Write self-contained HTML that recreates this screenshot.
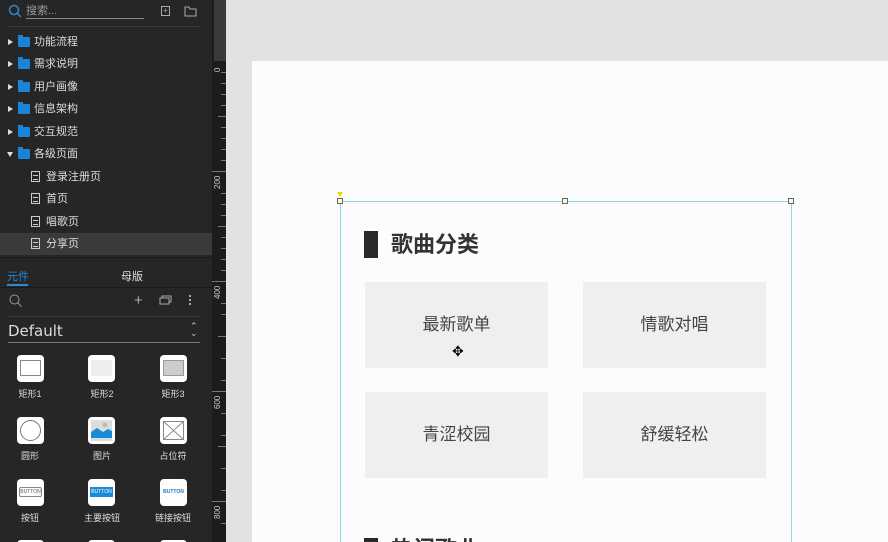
<!DOCTYPE html>
<html style="width:888px;height:542px;overflow:hidden"><head><meta charset="utf-8"><style>
*{margin:0;padding:0;box-sizing:border-box}
body{width:888px;height:542px;overflow:hidden;position:relative;background:#e2e2e2;font-family:"Liberation Sans","Noto Sans CJK SC",sans-serif}
.side{position:absolute;left:0;top:0;width:212px;height:542px;background:#262626;color:#ddd;overflow:hidden}
.a{position:absolute}
.row{position:absolute;left:0;width:212px;height:22px;font-size:11px;line-height:22px;color:#ddd}
.tri{position:absolute;left:8px;top:8px;width:0;height:0;border-top:3px solid transparent;border-bottom:3px solid transparent;border-left:5px solid #ddd}
.fold{position:absolute;left:18px;top:6px;width:12px;height:10px;background:#1a84d8;border-radius:1px}
.fold:before{content:"";position:absolute;left:0;top:-2px;width:5px;height:3px;background:#1a84d8}
.pg{position:absolute;left:31px;top:5px;width:9px;height:11px;border:1px solid #ccc}
.pg:after{content:"";position:absolute;left:1px;top:3px;width:5px;height:3px;border-top:1px solid #ccc;border-bottom:1px solid #ccc}
.ic{position:absolute;width:27px;height:27px;background:#fff;border-radius:4px}
.lb{position:absolute;width:60px;text-align:center;font-size:9px;color:#ddd}
.ruler{position:absolute;left:212px;top:0;width:14px;height:542px;background:#1c1c1c;overflow:hidden}
.tk{position:absolute;right:0;height:1px;background:#777}
.rl{position:absolute;left:1px;font-size:8px;color:#ccc;transform:rotate(-90deg);transform-origin:left top;white-space:nowrap}
.box{position:absolute;background:#efefef;font-size:17px;color:#444;text-align:center;line-height:86px;width:183px;height:86px}
.canvas{position:absolute;left:226px;top:0;width:662px;height:542px;overflow:hidden}
</style></head><body>
<div class="side">
 <svg class="a" style="left:8px;top:4px" width="14" height="14"><circle cx="6" cy="6" r="4.5" fill="none" stroke="#2a8ad8" stroke-width="1.5"/><line x1="9.3" y1="9.3" x2="13" y2="13" stroke="#2a8ad8" stroke-width="1.5"/></svg>
 <div class="a" style="left:26px;top:5px;font-size:11px;color:#999;width:118px;border-bottom:1px solid #888;line-height:13px">搜索...</div>
 <div class="a" style="left:161px;top:6px;width:9px;height:10px;border:1px solid #aaa;font-size:8px;line-height:8px;text-align:center;color:#aaa">+</div>
 <svg class="a" style="left:184px;top:6px" width="13" height="11"><path d="M1 1h4l1 2h6v7H1z" fill="none" stroke="#aaa"/></svg>
 <div class="a" style="left:8px;top:26px;width:192px;height:1px;background:#3a3a3a"></div>
 <div class="row" style="top:31px"><div class="tri"></div><div class="fold"></div><span class="a" style="left:34px">功能流程</span></div>
 <div class="row" style="top:53px"><div class="tri"></div><div class="fold"></div><span class="a" style="left:34px">需求说明</span></div>
 <div class="row" style="top:76px"><div class="tri"></div><div class="fold"></div><span class="a" style="left:34px">用户画像</span></div>
 <div class="row" style="top:98px"><div class="tri"></div><div class="fold"></div><span class="a" style="left:34px">信息架构</span></div>
 <div class="row" style="top:121px"><div class="tri"></div><div class="fold"></div><span class="a" style="left:34px">交互规范</span></div>
 <div class="row" style="top:143px"><div class="tri" style="left:7px;top:9px;border-left:3px solid transparent;border-right:3px solid transparent;border-top:5px solid #ddd;border-bottom:0"></div><div class="fold"></div><span class="a" style="left:34px">各级页面</span></div>
 <div class="row" style="top:166px"><div class="pg"></div><span class="a" style="left:46px">登录注册页</span></div>
 <div class="row" style="top:188px"><div class="pg"></div><span class="a" style="left:46px">首页</span></div>
 <div class="row" style="top:211px"><div class="pg"></div><span class="a" style="left:46px">唱歌页</span></div>
 <div class="row" style="top:233px;background:#3a3a3a"><div class="pg"></div><span class="a" style="left:46px">分享页</span></div>
 <div class="a" style="left:0;top:257px;width:212px;height:285px;background:#262626;border-top:1px solid #1a1a1a"></div>
 <div class="a" style="left:7px;top:268px;font-size:11px;color:#2a8ad8">元件</div>
 <div class="a" style="left:7px;top:284px;width:21px;height:2px;background:#2a8ad8"></div>
 <div class="a" style="left:121px;top:268px;font-size:11px;color:#ddd">母版</div>
 <div class="a" style="left:0;top:287px;width:212px;height:1px;background:#1a1a1a"></div>
 <svg class="a" style="left:9px;top:294px" width="13" height="13"><circle cx="5.5" cy="5.5" r="4.5" fill="none" stroke="#999"/><line x1="9" y1="9" x2="12.5" y2="12.5" stroke="#999"/></svg>
 <div class="a" style="left:134px;top:292px;font-size:15px;color:#aaa">+</div>
 <svg class="a" style="left:159px;top:295px" width="13" height="10"><rect x="1" y="3" width="9" height="6" fill="none" stroke="#aaa"/><path d="M3 3V1h9v6h-2" fill="none" stroke="#aaa"/></svg>
 <div class="a" style="left:189px;top:295px;width:2px;height:10px;border-top:2px solid #aaa;border-bottom:2px solid #aaa"><div style="margin-top:2px;height:2px;background:#aaa"></div></div>
 <div class="a" style="left:8px;top:316px;width:192px;height:1px;background:#3a3a3a"></div>
 <div class="a" style="left:8px;top:322px;font-size:15px;color:#ddd;font-family:'DejaVu Sans',sans-serif">Default</div>
 <div class="a" style="left:190px;top:323px;font-size:9px;color:#ccc;line-height:7px">⌃<br>⌄</div>
 <div class="a" style="left:8px;top:342px;width:192px;height:1px;background:#777"></div>
 <div class="ic" style="left:17px;top:355px"><div class="a" style="left:3px;top:5px;width:21px;height:16px;border:1px solid #888"></div></div>
 <div class="ic" style="left:88px;top:355px"><div class="a" style="left:3px;top:5px;width:21px;height:16px;background:#eee"></div></div>
 <div class="ic" style="left:160px;top:355px"><div class="a" style="left:3px;top:5px;width:21px;height:16px;background:#ccc;border:1px solid #999"></div></div>
 <div class="lb" style="left:0;top:387px">矩形1</div><div class="lb" style="left:72px;top:387px">矩形2</div><div class="lb" style="left:143px;top:387px">矩形3</div>
 <div class="ic" style="left:17px;top:417px"><div class="a" style="left:3px;top:3px;width:21px;height:21px;border:1px solid #777;border-radius:50%"></div></div>
 <div class="ic" style="left:88px;top:417px"><svg class="a" style="left:3px;top:3px" width="21" height="21"><rect width="21" height="21" fill="#ddd"/><path d="M0 12l6-4 6 4 5-3 4 2v7H0z" fill="#1a8ad6"/><circle cx="14" cy="5" r="2.5" fill="#bbb"/></svg></div>
 <div class="ic" style="left:160px;top:417px"><svg class="a" style="left:3px;top:4px" width="21" height="19"><rect x=".5" y=".5" width="20" height="18" fill="none" stroke="#888"/><path d="M0 0L21 19M21 0L0 19" stroke="#888"/></svg></div>
 <div class="lb" style="left:0;top:449px">圆形</div><div class="lb" style="left:72px;top:449px">图片</div><div class="lb" style="left:143px;top:449px">占位符</div>
 <div class="ic" style="left:17px;top:479px"><div class="a" style="left:2px;top:8px;width:23px;height:10px;border:1px solid #888;border-radius:2px;font-size:5px;line-height:8px;text-align:center;color:#555">BUTTON</div></div>
 <div class="ic" style="left:88px;top:479px"><div class="a" style="left:2px;top:8px;width:23px;height:10px;background:#1a8ad6;font-size:5px;line-height:10px;text-align:center;color:#fff">BUTTON</div></div>
 <div class="ic" style="left:160px;top:479px"><div class="a" style="left:2px;top:8px;width:23px;height:10px;font-size:5px;line-height:10px;text-align:center;color:#1a7ac6;font-weight:bold">BUTTON</div></div>
 <div class="lb" style="left:0;top:511px">按钮</div><div class="lb" style="left:72px;top:511px">主要按钮</div><div class="lb" style="left:143px;top:511px">链接按钮</div>
 <div class="ic" style="left:17px;top:540px"></div><div class="ic" style="left:88px;top:540px"></div><div class="ic" style="left:160px;top:540px"></div>
</div>
<div class="ruler">
 <div class="a" style="left:2px;top:0;width:12px;height:61px;background:#3a3a3a"></div>
 <div class="tk" style="top:72px;width:5px"></div><div class="tk" style="top:83px;width:5px"></div><div class="tk" style="top:94px;width:5px"></div><div class="tk" style="top:105px;width:5px"></div><div class="tk" style="top:116px;width:8px"></div><div class="tk" style="top:127px;width:5px"></div><div class="tk" style="top:138px;width:5px"></div><div class="tk" style="top:149px;width:5px"></div><div class="tk" style="top:160px;width:5px"></div><div class="tk" style="top:171px;width:14px"></div>
 <div class="tk" style="top:193px;width:5px"></div><div class="tk" style="top:204px;width:5px"></div><div class="tk" style="top:215px;width:5px"></div><div class="tk" style="top:226px;width:8px"></div><div class="tk" style="top:237px;width:5px"></div><div class="tk" style="top:248px;width:5px"></div><div class="tk" style="top:259px;width:5px"></div><div class="tk" style="top:270px;width:5px"></div><div class="tk" style="top:281px;width:14px"></div>
 <div class="tk" style="top:303px;width:5px"></div><div class="tk" style="top:314px;width:5px"></div><div class="tk" style="top:336px;width:8px"></div><div class="tk" style="top:358px;width:5px"></div><div class="tk" style="top:380px;width:5px"></div><div class="tk" style="top:391px;width:14px"></div>
 <div class="tk" style="top:413px;width:5px"></div><div class="tk" style="top:435px;width:5px"></div><div class="tk" style="top:446px;width:8px"></div><div class="tk" style="top:468px;width:5px"></div><div class="tk" style="top:490px;width:5px"></div><div class="tk" style="top:501px;width:14px"></div><div class="tk" style="top:523px;width:5px"></div>
 <div class="rl" style="top:72px">0</div><div class="rl" style="top:189px">200</div><div class="rl" style="top:299px">400</div><div class="rl" style="top:409px">600</div><div class="rl" style="top:519px">800</div>
</div>
<div class="canvas">
<div class="a" style="left:26px;top:61px;width:636px;height:481px;background:#fcfcfc"></div>
<div class="a" style="left:114px;top:201px;width:452px;height:345px;border:1px solid #7fe0e4"></div>
<div class="a" style="left:111px;top:198px;width:6px;height:6px;background:#fff8d0;border:1px solid #666"></div>
<div class="a" style="left:336px;top:198px;width:6px;height:6px;background:#fff8d0;border:1px solid #666"></div>
<div class="a" style="left:562px;top:198px;width:6px;height:6px;background:#fff8d0;border:1px solid #666"></div>
<div class="a" style="left:111px;top:192px;width:0;height:0;border-left:3px solid transparent;border-right:3px solid transparent;border-top:5px solid #dd0"></div>
<div class="a" style="left:138px;top:231px;width:14px;height:27px;background:#2a2a2a"></div>
<div class="a" style="left:165px;top:229px;font-size:22px;color:#333;line-height:32px;font-weight:bold">歌曲分类</div>
<div class="box" style="left:139px;top:282px">最新歌单</div>
<div class="box" style="left:357px;top:282px">情歌对唱</div>
<div class="box" style="left:139px;top:392px">青涩校园</div>
<div class="box" style="left:357px;top:392px">舒缓轻松</div>
<div class="a" style="left:226px;top:345px;font-size:14px;color:#000;line-height:12px">✥</div>
<div class="a" style="left:138px;top:538px;width:14px;height:10px;background:#2a2a2a"></div>
<div class="a" style="left:165px;top:534px;font-size:22px;color:#333;line-height:32px;font-weight:bold">热门歌曲</div>
</div>
</body></html>
